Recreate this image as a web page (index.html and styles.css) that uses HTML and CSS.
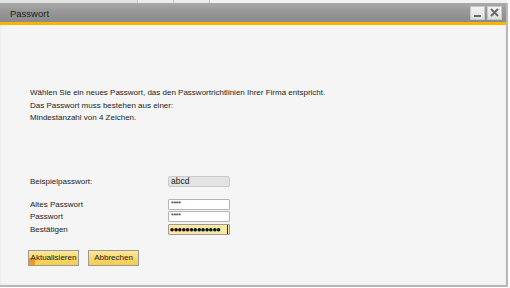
FILE: index.html
```
<!DOCTYPE html>
<html lang="de">
<head>
    <meta charset="UTF-8">
    <title>Passwort</title>
    <link rel="stylesheet" href="styles.css">
</head>
<body>

<div class="top-strip">
    <span class="tab"></span><span class="tab short"></span><span class="tab short"></span>
</div>

<div class="window">
    <div class="titlebar">
        <span class="title">Passwort</span>
        <div class="win-buttons">
            <span class="win-btn min"></span>
            <span class="win-btn close">
                <svg width="9" height="9" viewBox="0 0 9 9"><path d="M1 1 L8 8 M8 1 L1 8" stroke="#6a6a6a" stroke-width="2"/></svg>
            </span>
        </div>
    </div>
    <div class="accent"></div>

    <div class="content">
        <div class="intro">
            <p>Wählen Sie ein neues Passwort, das den Passwortrichtlinien Ihrer Firma entspricht.</p>
            <p>Das Passwort muss bestehen aus einer:</p>
            <p>Mindestanzahl von 4 Zeichen.</p>
        </div>

        <div class="form-row sample">
            <span class="label">Beispielpasswort:</span>
            <span class="field readonly">abcd</span>
        </div>

        <div class="form-grid">
            <span class="label">Altes Passwort</span>
            <span class="field stars">****</span>
            <span class="label">Passwort</span>
            <span class="field stars">****</span>
            <span class="label">Bestätigen</span>
            <span class="field active"><span class="dots">●●●●●●●●●●●●●</span><span class="caret"></span></span>
        </div>

        <div class="actions">
            <button class="btn default">Aktualisieren</button>
            <button class="btn">Abbrechen</button>
        </div>
    </div>
</div>

</body>
</html>
```

FILE: styles.css
```
html, body {
    margin: 0;
    padding: 0;
    background: #ffffff;
    font-family: "Liberation Sans", Arial, sans-serif;
    overflow: hidden;
}

.top-strip {
    height: 3px;
    width: 508px;
    background: #f2f2f2;
    display: flex;
}

.tab {
    width: 137px;
    height: 3px;
    background: #e2e2e2;
    border-right: 1px solid #c4c4c4;
}

.tab.short {
    width: 35px;
    background: #ececec;
}

.window {
    width: 506px;
    border-right: 2px solid #b8b8b8;
    border-bottom: 2px solid #b8b8b8;
}

.titlebar {
    height: 19px;
    display: flex;
    align-items: center;
    justify-content: space-between;
    padding-left: 10px;
    background: linear-gradient(#a9a9a9, #979797 45%, #8b8b8b);
}

.title {
    font-size: 9.5px;
    color: #1e1e1e;
    padding-top: 1px;
}

.win-buttons {
    display: flex;
    gap: 2px;
    margin-right: 4px;
}

.win-btn {
    width: 13px;
    height: 12px;
    border: 1px solid #c8c8c8;
    background: linear-gradient(#f4f4f4, #dedede);
    display: flex;
    align-items: center;
    justify-content: center;
    position: relative;
}

.win-btn.min::after {
    content: "";
    position: absolute;
    left: 3px;
    right: 3px;
    bottom: 2px;
    height: 2px;
    background: #6a6a6a;
}

.accent {
    height: 3px;
    background: #f7b500;
}

.content {
    height: 260px;
    box-sizing: border-box;
    background: #f5f5f5;
    border: 1px solid #eeeeee;
    border-top: none;
    padding: 62px 0 0 29px;
    font-size: 8px;
    color: #1c1c1c;
}

.intro p {
    margin: 0;
    height: 12.5px;
    line-height: 12.5px;
}

.form-row {
    display: flex;
    align-items: center;
}

.sample {
    margin-top: 51px;
}

.label {
    width: 138px;
    line-height: 11px;
}

.field {
    box-sizing: border-box;
    width: 62px;
    height: 11px;
    line-height: 9px;
    border: 1px solid #b4b4b4;
    background: #ffffff;
    padding-left: 2px;
    border-radius: 1px;
}

.field.readonly {
    background: #e3e3e3;
    border-color: #cbcbcb;
    border-radius: 2px;
    color: #222222;
    font-size: 8.5px;
}

.field.stars {
    font-size: 7px;
    line-height: 8px;
    letter-spacing: -0.3px;
}

.field.active {
    background: #fbe8a2;
    border-color: #9c9c9c;
    display: flex;
    align-items: center;
    padding-left: 1px;
}

.dots {
    font-family: "DejaVu Sans", sans-serif;
    font-size: 4.5px;
    letter-spacing: -0.05px;
    color: #111111;
}

.caret {
    width: 1px;
    height: 9px;
    background: #1d2b6a;
    margin-left: auto;
    margin-right: 1px;
}

.form-grid {
    margin-top: 12px;
    display: grid;
    grid-template-columns: 138px 62px;
    row-gap: 1.5px;
    align-items: center;
}

.actions {
    margin-top: 15px;
    display: flex;
    gap: 9px;
    margin-left: -2px;
}

.btn {
    width: 51px;
    height: 16px;
    padding: 0;
    font-family: "Liberation Sans", Arial, sans-serif;
    font-size: 8px;
    color: #1a1a1a;
    border: 1px solid #9a9a9a;
    background: linear-gradient(#fde89a, #f8d666 60%, #f4cc50);
}

.btn.default {
    background:
        linear-gradient(#ef9a1a, #ef9a1a) left bottom / 6px 7px no-repeat,
        linear-gradient(#fde89a, #f8d666 60%, #f4cc50);
}
```
